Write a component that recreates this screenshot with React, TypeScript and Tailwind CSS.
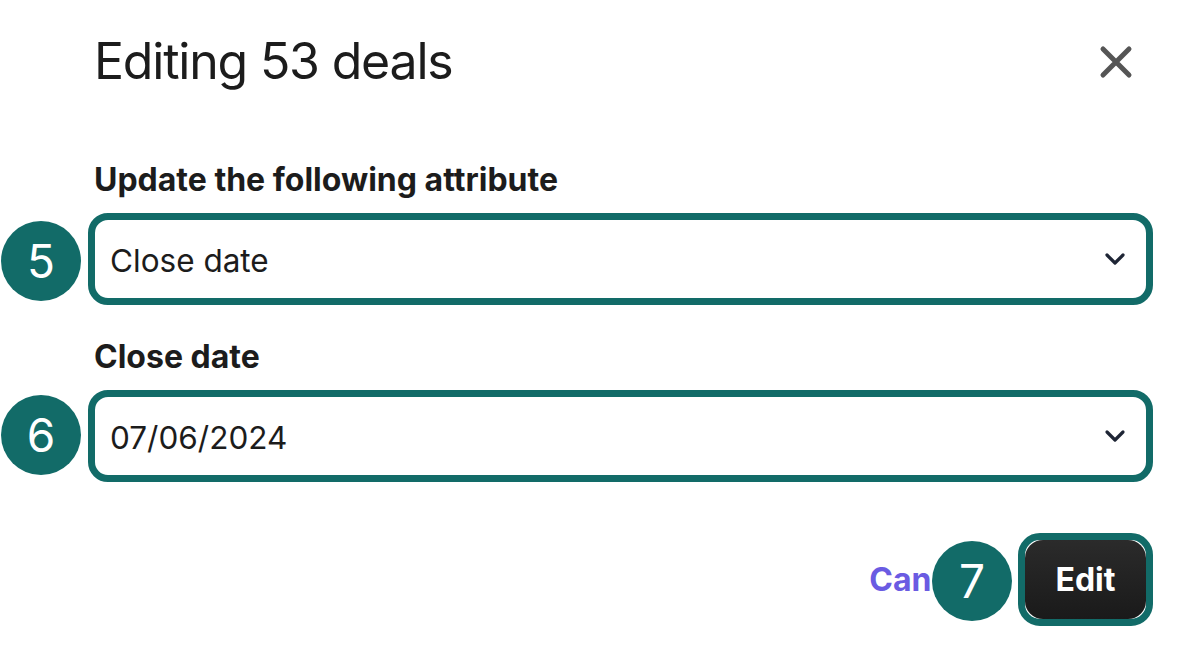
const TEAL = '#126b68';

function Chevron() {
	return (
		<svg width="22" height="14" viewBox="0 0 22 14" fill="none" aria-hidden="true">
			<path d="M3 3l8 8 8-8" stroke="#1e2535" strokeWidth="3.2" strokeLinecap="round" strokeLinejoin="round" />
		</svg>
	);
}

function Badge({ n, className }: { n: number; className: string }) {
	return (
		<div
			className={`absolute w-20 h-20 rounded-full bg-[#126b68] text-white flex items-center justify-center text-[46px] leading-none ${className}`}
		>
			{n}
		</div>
	);
}

function SelectBox({ value }: { value: string }) {
	return (
		<div className="h-[92px] border-[7px] border-[#126b68] rounded-[20px] flex items-center justify-between pl-[15px] pr-[20px] bg-white">
			<span className="mt-[3px] text-[31.5px] leading-none text-[#1c1c1c]">{value}</span>
			<Chevron />
		</div>
	);
}

export default function App() {
	return (
		<div
			className="relative w-[1198px] h-[652px] bg-white overflow-hidden"
			style={{ fontFamily: 'Inter, "Noto Sans", sans-serif' }}
		>
			<div className="pl-[88px] pr-[45px] pt-[36px] flex flex-col">
				<div className="flex items-start justify-between pl-[6px]">
					<h1 className="text-[50px] leading-none text-[#1c1c1c] tracking-[-1.2px]">Editing 53 deals</h1>
					<button type="button" className="mt-[9px] mr-[20px]" aria-label="Close">
						<svg width="34" height="34" viewBox="0 0 34 34" fill="none">
							<path d="M4 4l26 26M30 4L4 30" stroke="#555" strokeWidth="5" strokeLinecap="round" />
						</svg>
					</button>
				</div>

				<label className="mt-[78px] pl-[6px] text-[32px] leading-none font-bold text-[#1c1c1c]">
					Update the following attribute
				</label>
				<div className="mt-[17px]">
					<SelectBox value="Close date" />
				</div>

				<label className="mt-[36px] pl-[6px] text-[32px] leading-none font-bold text-[#1c1c1c]">Close date</label>
				<div className="mt-[17px]">
					<SelectBox value="07/06/2024" />
				</div>

				<div className="mt-[51px] flex items-center justify-end gap-[40px]">
					<button type="button" className="text-[32px] font-bold text-[#6a5be2] leading-none">
						Cancel
					</button>
					<div className="border-[7px] rounded-[22px] bg-white" style={{ borderColor: TEAL }}>
						<button
							type="button"
							className="w-[121px] h-[79px] rounded-[18px] bg-gradient-to-b from-[#2b2b2b] to-[#1a1a1a] text-white text-[32px] font-bold leading-none"
						>
							Edit
						</button>
					</div>
				</div>
			</div>

			<Badge n={5} className="left-[1px] top-[221px]" />
			<Badge n={6} className="left-[1px] top-[395px]" />
			<Badge n={7} className="left-[932px] top-[541px]" />
		</div>
	);
}
